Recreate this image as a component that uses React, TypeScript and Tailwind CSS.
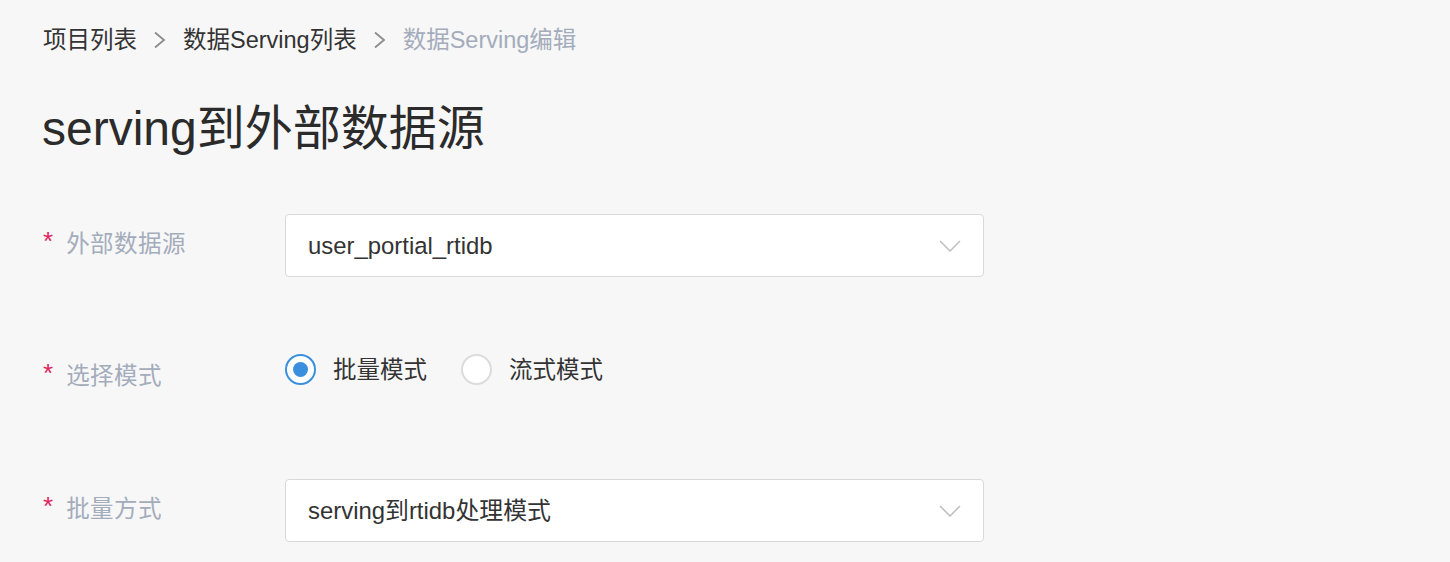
const font = {
  fontFamily:
    '"Liberation Sans", "Noto Sans CJK SC", sans-serif',
};

const Chevron = () => (
  <svg width="22" height="12" viewBox="0 0 22 12" fill="none">
    <path d="M1 1l10 10L21 1" stroke="#bfbfbf" strokeWidth="1.5" />
  </svg>
);

const Separator = () => (
  <svg width="14" height="18" viewBox="0 0 14 18" fill="none" className="mx-[16px]">
    <path d="M2 1.5l9 7.5-9 7.5" stroke="#8c8c8c" strokeWidth="1.8" />
  </svg>
);

const Label = ({ text }: { text: string }) => (
  <div className="w-[242px] shrink-0 flex items-center text-[23.5px] leading-[30px] -mt-[3px]">
    <span className="text-[#e0245e] text-[26px] mr-[13px] -mt-[6px]">*</span>
    <span className="text-[#a3acbb] tracking-[0.5px]">{text}</span>
  </div>
);

const Select = ({ value }: { value: string }) => (
  <div className="w-[699px] h-[63px] bg-white border border-[#d9d9d9] rounded-[4px] flex items-center justify-between pl-[22px] pr-[22px]">
    <span className="text-[23.9px] text-[#333]">{value}</span>
    <Chevron />
  </div>
);

const Radio = ({ checked, label }: { checked?: boolean; label: string }) => (
  <div className="flex items-center">
    {checked ? (
      <div className="w-[31px] h-[31px] rounded-full border-[2px] border-[#3b8fdf] bg-white flex items-center justify-center">
        <div className="w-[15px] h-[15px] rounded-full bg-[#3b8fdf]" />
      </div>
    ) : (
      <div className="w-[31px] h-[31px] rounded-full border-[2px] border-[#dcdcdc] bg-white" />
    )}
    <span className="ml-[17px] text-[23.5px] leading-[30px] text-[#333]">{label}</span>
  </div>
);

export default function App() {
  return (
    <div className="min-h-screen bg-[#f7f7f7] pl-[43px] pt-[25px]" style={font}>
      <div className="flex items-center text-[23.5px] leading-[30px]">
        <span className="text-[#333]">项目列表</span>
        <Separator />
        <span className="text-[#333]">数据Serving列表</span>
        <Separator />
        <span className="text-[#a3acbb]">数据Serving编辑</span>
      </div>

      <h1 className="mt-[44px] text-[48px] leading-[60px] text-[#2b2b2b] -ml-[1px]">
        serving到外部数据源
      </h1>

      <div className="mt-[55px] flex items-center">
        <Label text="外部数据源" />
        <Select value="user_portial_rtidb" />
      </div>

      <div className="mt-[64px] h-[62px] flex items-start">
        <div className="pt-[23px]">
          <Label text="选择模式" />
        </div>
        <div className="pt-[13px] flex items-center gap-[34px]">
          <Radio checked label="批量模式" />
          <Radio label="流式模式" />
        </div>
      </div>

      <div className="mt-[76px] flex items-center">
        <Label text="批量方式" />
        <Select value="serving到rtidb处理模式" />
      </div>
    </div>
  );
}
